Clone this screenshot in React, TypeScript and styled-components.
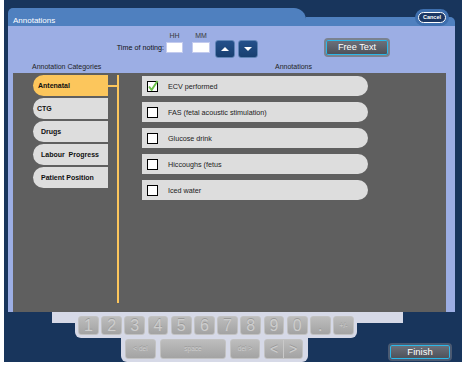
import React from "react"
import styled, { createGlobalStyle } from "styled-components"

const GlobalStyle = createGlobalStyle`
  body {
    margin: 0;
    background: #ffffff;
    font-family: "Liberation Sans", Arial, sans-serif;
  }
`

const navy = "#18355c"
const titleBlue = "#4f80bf"
const lavender = "#9caee4"
const slate = "#5f5f5f"
const orange = "#fcc65c"
const pale = "#dddddd"
const keyPanel = "#d6d9e7"

const Window = styled.div`
  width: 458px;
  height: 362px;
  margin-left: 4px;
  padding-top: 8px;
  box-sizing: border-box;
  background: ${navy};
  display: flex;
  flex-direction: column;
`

const Header = styled.div`
  position: relative;
  display: flex;
  flex: none;
  height: 18px;
  margin: 0 7px 0 4px;
`

const TitleTab = styled.div`
  width: 298px;
  box-sizing: border-box;
  padding: 8px 0 0 5px;
  background: ${titleBlue};
  border-radius: 5px 12px 0 0;
  color: #ffffff;
  font-size: 8px;
  line-height: 10px;
`

const TitleRest = styled.div`
  flex: 1;
  align-self: flex-end;
  height: 9px;
  background: ${titleBlue};
  border-top-right-radius: 5px;
`

const CancelButton = styled.button`
  position: absolute;
  left: 407px;
  top: 1px;
  width: 34px;
  height: 17px;
  padding: 0;
  border: none;
  border-radius: 9px;
  background: #3e6fae;
  display: flex;
  align-items: center;
  justify-content: center;
`

const CancelInner = styled.span`
  width: 28px;
  height: 11px;
  box-sizing: border-box;
  border: 1px solid #ffffff;
  border-radius: 6px;
  background: #1b3764;
  color: #ffffff;
  font-family: "Liberation Sans", Arial, sans-serif;
  font-size: 5.5px;
  font-weight: bold;
  line-height: 9px;
  text-align: center;
`

const Body = styled.div`
  flex: none;
  height: 286px;
  margin: 0 7px 0 4px;
  background: ${lavender};
  display: flex;
  flex-direction: column;
`

const ToolRow = styled.div`
  display: flex;
  align-items: flex-end;
  height: 32px;
  flex: none;
`

const TimeLabel = styled.div`
  width: 158px;
  box-sizing: border-box;
  padding-right: 2px;
  margin-bottom: 5px;
  text-align: right;
  font-size: 7.2px;
  line-height: 10px;
  color: #111;
`

const Field = styled.div<{ $gap: number }>`
  display: flex;
  flex-direction: column;
  margin-right: ${({ $gap }) => $gap}px;
`

const FieldLabel = styled.div`
  font-size: 7px;
  line-height: 9px;
  color: #3a3a3a;
  text-align: center;
  margin-bottom: 2px;
`

const TimeInput = styled.div<{ $w: number }>`
  width: ${({ $w }) => $w}px;
  height: 11px;
  box-sizing: border-box;
  background: #ffffff;
  border: 1px solid #c3cbee;
  margin-bottom: 5px;
`

const ArrowButton = styled.button`
  width: 20px;
  height: 18px;
  margin-right: 3px;
  padding: 0;
  box-sizing: border-box;
  background: linear-gradient(#24508a, #183f70);
  border: 1px solid #5f84b5;
  border-radius: 3px;
  display: flex;
  align-items: center;
  justify-content: center;
`

const Triangle = styled.span<{ $down?: boolean }>`
  width: 0;
  height: 0;
  border-left: 4px solid transparent;
  border-right: 4px solid transparent;
  ${({ $down }) =>
    $down ? "border-top: 4px solid #ffffff;" : "border-bottom: 4px solid #ffffff;"}
`

const GlossButton = styled.button<{ $w: number; $h: number; $rim: string; $size: number }>`
  width: ${({ $w }) => $w}px;
  height: ${({ $h }) => $h}px;
  padding: 0;
  box-sizing: border-box;
  border: 2px solid ${({ $rim }) => $rim};
  border-radius: 4px;
  box-shadow: inset 0 0 0 1px #2cb8e8;
  background: linear-gradient(#6d727c, #4c5058);
  color: #ffffff;
  font-family: "Liberation Sans", Arial, sans-serif;
  font-size: ${({ $size }) => $size}px;
  line-height: 1;
`

const FreeText = styled(GlossButton)`
  margin-left: 63px;
  margin-bottom: 1px;
`

const LabelsRow = styled.div`
  display: grid;
  grid-template-columns: 267px 1fr;
  align-items: end;
  height: 15px;
  flex: none;
  box-sizing: border-box;
  padding-bottom: 2px;
  font-size: 7px;
  line-height: 9px;
  color: #1e1e1e;
`

const CategoriesLabel = styled.div`
  padding-left: 24px;
`

const Content = styled.div`
  flex: 1;
  margin: 0 9px 0 5px;
  background: ${slate};
  display: flex;
  align-items: flex-start;
`

const CategoryColumn = styled.div`
  width: 104px;
  box-sizing: border-box;
  padding: 2px 0 0 20px;
  display: flex;
  flex-direction: column;
  gap: 2px;
`

const CategoryRow = styled.div`
  display: flex;
  align-items: center;
`

const Tab = styled.div<{ $active?: boolean; $indent: number }>`
  width: 75px;
  height: 21px;
  box-sizing: border-box;
  padding-left: ${({ $indent }) => $indent}px;
  border-radius: 11px 0 0 11px;
  background: ${({ $active }) => ($active ? orange : pale)};
  display: flex;
  align-items: center;
  font-size: 7px;
  font-weight: bold;
  color: #101010;
  white-space: pre;
`

const Connector = styled.div<{ $active?: boolean }>`
  width: 9px;
  height: 2px;
  background: ${({ $active }) => ($active ? orange : "transparent")};
`

const Divider = styled.div`
  width: 2px;
  height: 228px;
  margin-top: 2px;
  background: ${orange};
`

const List = styled.div`
  margin-left: 23px;
  padding-top: 3px;
  display: flex;
  flex-direction: column;
  gap: 6px;
`

const AnnotationRow = styled.div`
  width: 226px;
  height: 20px;
  box-sizing: border-box;
  padding-left: 5px;
  background: ${pale};
  border-radius: 0 10px 10px 0;
  display: flex;
  align-items: center;
  gap: 9px;
  font-size: 7.2px;
  color: #222;
`

const Footer = styled.div`
  flex: 1;
  display: flex;
  flex-direction: column;
`

const Row1Shell = styled.div`
  width: 351px;
  margin-left: 48px;
  box-sizing: border-box;
  padding: 0 46px 0 23px;
  background: linear-gradient(${keyPanel}, ${keyPanel}) top / 100% 11px no-repeat;
  border-bottom-left-radius: 6px;
`

const KeyRow = styled.div`
  display: flex;
  gap: 2.3px;
  padding: 4px 3px 3px 3px;
  background: ${keyPanel};
  border-radius: 0 0 6px 6px;
`

const BottomRow = styled.div`
  display: flex;
  align-items: flex-start;
`

const KeyRow2 = styled.div`
  width: 187px;
  margin-left: 117px;
  box-sizing: border-box;
  padding: 1px 3px 3px 4px;
  background: ${keyPanel};
  border-radius: 0 0 6px 6px;
  display: flex;
  gap: 4px;
`

const Key = styled.div<{ $w: number; $h: number; $size: number }>`
  width: ${({ $w }) => $w}px;
  height: ${({ $h }) => $h}px;
  box-sizing: border-box;
  border: 1px solid #c2c2c2;
  border-radius: 3px;
  background: linear-gradient(#bdbdbd, #a3a3a3);
  color: #cdcdcd;
  font-size: ${({ $size }) => $size}px;
  line-height: ${({ $h }) => $h - 2}px;
  text-align: center;
  display: flex;
  justify-content: center;
  text-shadow: 0 -1px 0 #9a9a9a;
`

const KeyHalf = styled.span`
  flex: 1;
  & + & {
    border-left: 1px solid #c9c9c9;
  }
`

const Finish = styled(GlossButton)`
  margin-left: auto;
  margin-right: 10px;
  margin-top: 5px;
`

const categories = [
  { label: "Antenatal", indent: 5, active: true },
  { label: "CTG", indent: 4 },
  { label: "Drugs", indent: 8 },
  { label: "Labour  Progress", indent: 8 },
  { label: "Patient Position", indent: 8 },
]

const annotations = [
  { label: "ECV performed", checked: true },
  { label: "FAS (fetal acoustic stimulation)" },
  { label: "Glucose drink" },
  { label: "Hiccoughs (fetus" },
  { label: "Iced water" },
]

const digits = ["1", "2", "3", "4", "5", "6", "7", "8", "9", "0", ".", "+/-"]

const CheckBox = ({ checked }: { checked?: boolean }) => (
  <svg width="12" height="12" viewBox="0 0 12 12" style={{ overflow: "visible", flex: "none" }}>
    <rect x="0.5" y="1.5" width="10" height="10" fill="#ffffff" stroke="#000000" strokeWidth="1" />
    {checked && (
      <path d="M2 6.5 L4.6 10 L10.5 1" fill="none" stroke="#6cc24a" strokeWidth="2" strokeLinejoin="round" />
    )}
  </svg>
)

const App = () => {
  return (
    <>
      <GlobalStyle />
      <Window>
        <Header>
          <TitleTab>Annotations</TitleTab>
          <TitleRest />
          <CancelButton>
            <CancelInner>Cancel</CancelInner>
          </CancelButton>
        </Header>
        <Body>
          <ToolRow>
            <TimeLabel>Time of noting:</TimeLabel>
            <Field $gap={9}>
              <FieldLabel>HH</FieldLabel>
              <TimeInput $w={17} />
            </Field>
            <Field $gap={5}>
              <FieldLabel>MM</FieldLabel>
              <TimeInput $w={18} />
            </Field>
            <ArrowButton>
              <Triangle />
            </ArrowButton>
            <ArrowButton>
              <Triangle $down />
            </ArrowButton>
            <FreeText $w={66} $h={19} $rim="#7a8290" $size={9.2}>
              Free Text
            </FreeText>
          </ToolRow>
          <LabelsRow>
            <CategoriesLabel>Annotation Categories</CategoriesLabel>
            <div>Annotations</div>
          </LabelsRow>
          <Content>
            <CategoryColumn>
              {categories.map((c) => (
                <CategoryRow key={c.label}>
                  <Tab $active={c.active} $indent={c.indent}>
                    {c.label}
                  </Tab>
                  <Connector $active={c.active} />
                </CategoryRow>
              ))}
            </CategoryColumn>
            <Divider />
            <List>
              {annotations.map((a) => (
                <AnnotationRow key={a.label}>
                  <CheckBox checked={a.checked} />
                  {a.label}
                </AnnotationRow>
              ))}
            </List>
          </Content>
        </Body>
        <Footer>
          <Row1Shell>
            <KeyRow>
              {digits.map((d) => (
                <Key key={d} $w={21} $h={19} $size={d.length > 1 ? 7 : 16}>
                  {d}
                </Key>
              ))}
            </KeyRow>
          </Row1Shell>
          <BottomRow>
            <KeyRow2>
              <Key $w={31} $h={20} $size={6.5}>&lt; del</Key>
              <Key $w={66} $h={20} $size={6.5}>space</Key>
              <Key $w={30} $h={20} $size={6.5}>del &gt;</Key>
              <Key $w={39} $h={20} $size={14}>
                <KeyHalf>&lt;</KeyHalf>
                <KeyHalf>&gt;</KeyHalf>
              </Key>
            </KeyRow2>
            <Finish $w={64} $h={18} $rim="#4b5a72" $size={9.5}>
              Finish
            </Finish>
          </BottomRow>
        </Footer>
      </Window>
    </>
  )
}

export default App
